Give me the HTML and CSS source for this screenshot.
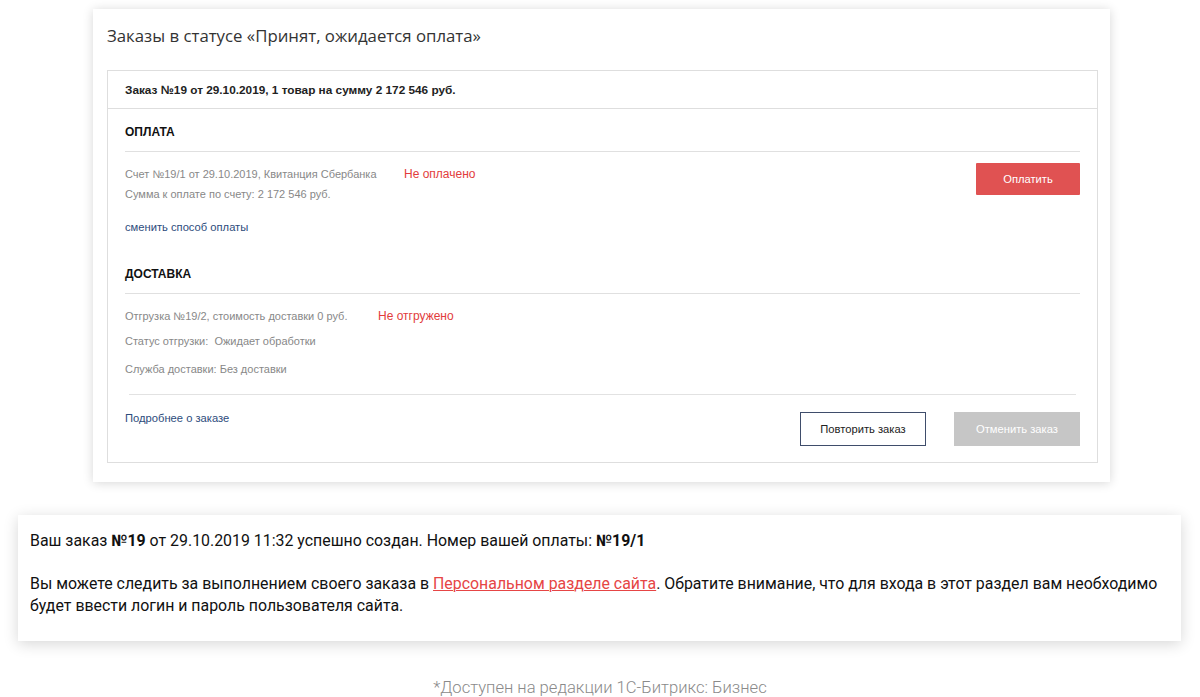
FILE: index.html
```html
<!DOCTYPE html>
<html lang="ru">
<head>
<meta charset="utf-8">
<link rel="stylesheet" href="styles.css">
</head>
<body>
<div class="page">
  <section class="orders">
    <h1 class="orders-title">Заказы в статусе «Принят, ожидается оплата»</h1>
    <div class="order">
      <div class="order-head">Заказ №19 от 29.10.2019, 1 товар на сумму 2 172 546 руб.</div>
      <div class="order-body">
        <div class="sec-title">ОПЛАТА</div>
        <div class="pay">
          <div class="pay-info">
            <div class="row"><span class="w-pay">Счет №19/1 от 29.10.2019, Квитанция Сбербанка</span><span class="status">Не оплачено</span></div>
            <div class="row">Сумма к оплате по счету: 2 172 546 руб.</div>
          </div>
          <button class="btn btn-red">Оплатить</button>
        </div>
        <a class="link change">сменить способ оплаты</a>
        <div class="sec-title sec-delivery">ДОСТАВКА</div>
        <div class="row drow first"><span class="w-del">Отгрузка №19/2, стоимость доставки 0 руб.</span><span class="status">Не отгружено</span></div>
        <div class="row drow second">Статус отгрузки:&nbsp; Ожидает обработки</div>
        <div class="row drow last">Служба доставки: Без доставки</div>
        <div class="order-foot">
          <a class="link more">Подробнее о заказе</a>
          <div class="actions">
            <button class="btn btn-outline">Повторить заказ</button>
            <button class="btn btn-gray">Отменить заказ</button>
          </div>
        </div>
      </div>
    </div>
  </section>

  <section class="notice">
    <p>Ваш заказ <b>№19</b> от 29.10.2019 11:32 успешно создан. Номер вашей оплаты: <b>№19/1</b></p>
    <p>Вы можете следить за выполнением своего заказа в <a class="red-link">Персональном разделе сайта</a>. Обратите внимание, что для входа в этот раздел вам необходимо будет ввести логин и пароль пользователя сайта.</p>
  </section>

  <p class="footnote">*Доступен на редакции 1С-Битрикс: Бизнес</p>
</div>
</body>
</html>
```

FILE: styles.css
```css
* { box-sizing: border-box; }
html, body { margin: 0; padding: 0; background: #fff; }
body { font-family: "Liberation Sans", Arial, sans-serif; color: #222; }

.page { width: 1200px; padding-top: 9px; }

.orders {
  margin-left: 93px;
  width: 1017px;
  background: #fff;
  box-shadow: 0 1px 10px rgba(0,0,0,0.16);
  padding: 15px 12px 19px 14px;
}
.orders-title {
  margin: 0 0 22px;
  font-family: "Open Sans", sans-serif;
  font-weight: 400;
  font-size: 16.8px;
  line-height: 24px;
  color: #333;
}
.order { border: 1px solid #dedede; }
.order-head {
  height: 38px;
  border-bottom: 1px solid #dedede;
  padding-left: 17px;
  font-weight: 700;
  font-size: 11.8px;
  line-height: 39px;
  color: #222;
}
.order-body { padding: 0 17px 16px 17px; }
.sec-title {
  padding-top: 15px;
  padding-bottom: 11px;
  border-bottom: 1px solid #e0e0e0;
  font-weight: 700;
  font-size: 12px;
  line-height: 16px;
  color: #111;
}
.sec-delivery { padding-top: 29px; }
.pay { display: flex; justify-content: space-between; align-items: flex-start; margin-top: 11px; }
.pay-info { padding-top: 1px; }
.row { font-size: 11px; line-height: 20px; color: #888; display: flex; }
.w-pay { width: 279px; }
.w-del { width: 253px; }
.status { color: #e23c3c; font-size: 12px; }
.link { color: #2d4c7c; font-size: 11.2px; cursor: pointer; }
.change { display: block; margin-top: 13px; line-height: 20px; }
.drow.first { margin-top: 12px; }
.drow.second { margin-top: 5px; }
.drow.last { margin-top: 8px; }
.order-foot {
  margin: 15px 4px 0 4px;
  border-top: 1px solid #e2e2e2;
  padding-top: 17px;
  display: flex;
  justify-content: space-between;
  align-items: flex-start;
}
.more { margin-left: -4px; line-height: 16px; margin-top: -2px; }
.actions { display: flex; gap: 28px; margin-right: -4px; }
.btn {
  font-family: "Liberation Sans", Arial, sans-serif;
  font-size: 11.2px;
  border: 0;
  padding: 0;
  cursor: pointer;
}
.btn-red {
  width: 104px; height: 32px;
  background: #e05252;
  color: #fff;
  border-radius: 1px;
}
.btn-outline {
  width: 126px; height: 34px;
  background: #fff;
  border: 1px solid #3f4d6b;
  color: #222;
}
.btn-gray {
  width: 126px; height: 34px;
  background: #c6c6c6;
  color: #fff;
}

.notice {
  margin: 33px 0 0 18px;
  width: 1163px;
  background: #fff;
  box-shadow: 0 3px 14px rgba(0,0,0,0.16);
  padding: 15px 12px 24px 12px;
  font-family: "Roboto", sans-serif;
  font-size: 15.9px;
  line-height: 22px;
  color: #111;
}
.notice p { margin: 0; }
.notice p + p { margin-top: 21px; }
.red-link { color: #e64545; text-decoration: underline; text-decoration-thickness: 1px; }

.footnote {
  margin: 37px 0 0;
  text-align: center;
  font-family: "Roboto", sans-serif;
  font-weight: 300;
  font-size: 16.6px;
  line-height: 20px;
  color: #8a8a8a;
}
```
